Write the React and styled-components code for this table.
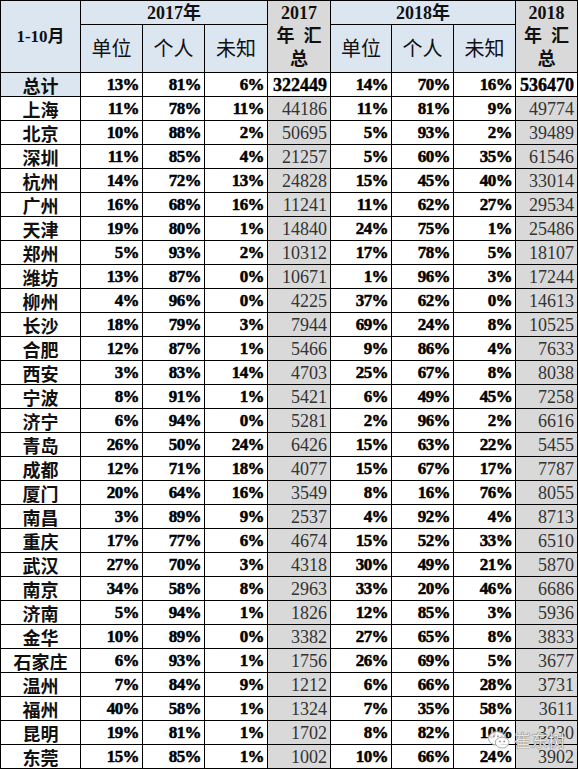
import React from 'react';
import styled, { createGlobalStyle } from 'styled-components';

const GlobalStyle = createGlobalStyle`
  body {
    margin: 0;
    background: #fff;
  }
`;

const rows = [
  ['上海', '11%', '78%', '11%', '44186', '11%', '81%', '9%', '49774'],
  ['北京', '10%', '88%', '2%', '50695', '5%', '93%', '2%', '39489'],
  ['深圳', '11%', '85%', '4%', '21257', '5%', '60%', '35%', '61546'],
  ['杭州', '14%', '72%', '13%', '24828', '15%', '45%', '40%', '33014'],
  ['广州', '16%', '68%', '16%', '11241', '11%', '62%', '27%', '29534'],
  ['天津', '19%', '80%', '1%', '14840', '24%', '75%', '1%', '25486'],
  ['郑州', '5%', '93%', '2%', '10312', '17%', '78%', '5%', '18107'],
  ['潍坊', '13%', '87%', '0%', '10671', '1%', '96%', '3%', '17244'],
  ['柳州', '4%', '96%', '0%', '4225', '37%', '62%', '0%', '14613'],
  ['长沙', '18%', '79%', '3%', '7944', '69%', '24%', '8%', '10525'],
  ['合肥', '12%', '87%', '1%', '5466', '9%', '86%', '4%', '7633'],
  ['西安', '3%', '83%', '14%', '4703', '25%', '67%', '8%', '8038'],
  ['宁波', '8%', '91%', '1%', '5421', '6%', '49%', '45%', '7258'],
  ['济宁', '6%', '94%', '0%', '5281', '2%', '96%', '2%', '6616'],
  ['青岛', '26%', '50%', '24%', '6426', '15%', '63%', '22%', '5455'],
  ['成都', '12%', '71%', '18%', '4077', '15%', '67%', '17%', '7787'],
  ['厦门', '20%', '64%', '16%', '3549', '8%', '16%', '76%', '8055'],
  ['南昌', '3%', '89%', '9%', '2537', '4%', '92%', '4%', '8713'],
  ['重庆', '17%', '77%', '6%', '4674', '15%', '52%', '33%', '6510'],
  ['武汉', '27%', '70%', '3%', '4318', '30%', '49%', '21%', '5870'],
  ['南京', '34%', '58%', '8%', '2963', '33%', '20%', '46%', '6686'],
  ['济南', '5%', '94%', '1%', '1826', '12%', '85%', '3%', '5936'],
  ['金华', '10%', '89%', '0%', '3382', '27%', '65%', '8%', '3833'],
  ['石家庄', '6%', '93%', '1%', '1756', '26%', '69%', '5%', '3677'],
  ['温州', '7%', '84%', '9%', '1212', '6%', '66%', '28%', '3731'],
  ['福州', '40%', '58%', '1%', '1324', '7%', '35%', '58%', '3611'],
  ['昆明', '19%', '81%', '1%', '1702', '8%', '82%', '10%', '3230'],
  ['东莞', '15%', '85%', '1%', '1002', '10%', '66%', '24%', '3902'],
];

const widths = [80, 62, 62, 63, 63, 61, 62, 62, 62];

const Page = styled.div`
  position: relative;
  width: 578px;
  height: 770px;
  overflow: hidden;
`;

const Table = styled.table`
  table-layout: fixed;
  width: 577px;
  border-collapse: collapse;
  border: 1px solid #000;
`;

const HeadCell = styled.th`
  border: 1px solid #000;
  background: ${(p) => (p.$sum ? '#d9d9d9' : '#dce6f1')};
  color: #111;
  padding: 0;
  text-align: center;
  font-family: "Liberation Serif", "Noto Sans CJK SC", serif;
  font-weight: ${(p) => (p.$bold ? 700 : 400)};
  font-size: ${(p) => p.$size || 20}px;
  line-height: ${(p) => p.$lh || 22}px;
`;

const TopRow = styled.tr`
  height: 24px;
`;

const SubRow = styled.tr`
  height: 48px;
`;

const BodyRow = styled.tr`
  height: 24px;
`;

const City = styled.td`
  border: 1px solid #000;
  background: ${(p) => (p.$shade ? '#dce6f1' : '#fff')};
  text-align: center;
  padding: 0;
  font-family: "Noto Sans CJK SC", sans-serif;
  font-weight: 700;
  font-size: 18px;
  line-height: 22px;
  color: #111;
`;

const Pct = styled.td`
  border: 1px solid #000;
  background: #fff;
  text-align: right;
  padding: 0 3px 0 0;
  font-family: "Liberation Serif", serif;
  font-weight: 700;
  font-size: 17px;
  letter-spacing: -0.6px;
  -webkit-text-stroke: 0.5px #000;
  line-height: 22px;
  color: #000;
`;

const Sum = styled.td`
  border: 1px solid #000;
  background: ${(p) => (p.$total ? '#fff' : '#d9d9d9')};
  text-align: right;
  padding: 0 3px 0 0;
  font-family: "Liberation Serif", serif;
  font-weight: ${(p) => (p.$total ? 700 : 400)};
  font-size: 18px;
  line-height: 22px;
  color: ${(p) => (p.$total ? '#000' : '#333')};
  -webkit-text-stroke: ${(p) => (p.$total ? '0.4px #000' : '0')};
`;

const Mark = styled.div`
  position: absolute;
  left: 487px;
  top: 729px;
  display: flex;
  align-items: center;
  gap: 3px;
  pointer-events: none;
`;

const MarkText = styled.span`
  font-family: "Noto Sans CJK SC", sans-serif;
  font-size: 17px;
  line-height: 22px;
  color: rgba(255, 255, 255, 0.85);
  text-shadow: 0 0 1px #666, 0 0 1px #666;
`;

function WechatIcon() {
  return (
    <svg width="24" height="21" viewBox="0 0 22 20">
      <ellipse cx="9" cy="8" rx="8" ry="6.5" fill="rgba(255,255,255,0.85)" stroke="#999" strokeWidth="0.8" />
      <ellipse cx="14" cy="12" rx="6.5" ry="5.2" fill="rgba(255,255,255,0.85)" stroke="#999" strokeWidth="0.8" />
      <circle cx="12" cy="11" r="0.9" fill="#999" />
      <circle cx="16" cy="11" r="0.9" fill="#999" />
      <circle cx="6" cy="6" r="0.9" fill="#999" />
      <circle cx="10" cy="6" r="0.9" fill="#999" />
    </svg>
  );
}

export default function App() {
  return (
    <Page>
      <GlobalStyle />
      <Table>
        <colgroup>
          {widths.map((w, i) => (
            <col key={i} style={{ width: w }} />
          ))}
        </colgroup>
        <thead>
          <TopRow>
            <HeadCell rowSpan={2} $bold $size={17}>1-10月</HeadCell>
            <HeadCell colSpan={3} $bold $size={18}>2017年</HeadCell>
            <HeadCell rowSpan={2} $sum $bold $size={18} $lh={23}>
              2017<br />年&nbsp;&nbsp;汇<br />总
            </HeadCell>
            <HeadCell colSpan={3} $bold $size={18}>2018年</HeadCell>
            <HeadCell rowSpan={2} $sum $bold $size={18} $lh={23}>
              2018<br />年&nbsp;&nbsp;汇<br />总
            </HeadCell>
          </TopRow>
          <SubRow>
            <HeadCell>单位</HeadCell>
            <HeadCell>个人</HeadCell>
            <HeadCell>未知</HeadCell>
            <HeadCell>单位</HeadCell>
            <HeadCell>个人</HeadCell>
            <HeadCell>未知</HeadCell>
          </SubRow>
        </thead>
        <tbody>
          <BodyRow>
            <City $shade>总计</City>
            <Pct>13%</Pct>
            <Pct>81%</Pct>
            <Pct>6%</Pct>
            <Sum $total>322449</Sum>
            <Pct>14%</Pct>
            <Pct>70%</Pct>
            <Pct>16%</Pct>
            <Sum $total>536470</Sum>
          </BodyRow>
          {rows.map((r) => (
            <BodyRow key={r[0]}>
              <City>{r[0]}</City>
              <Pct>{r[1]}</Pct>
              <Pct>{r[2]}</Pct>
              <Pct>{r[3]}</Pct>
              <Sum>{r[4]}</Sum>
              <Pct>{r[5]}</Pct>
              <Pct>{r[6]}</Pct>
              <Pct>{r[7]}</Pct>
              <Sum>{r[8]}</Sum>
            </BodyRow>
          ))}
        </tbody>
      </Table>
      <Mark>
        <WechatIcon />
        <MarkText>崔东树</MarkText>
      </Mark>
    </Page>
  );
}
